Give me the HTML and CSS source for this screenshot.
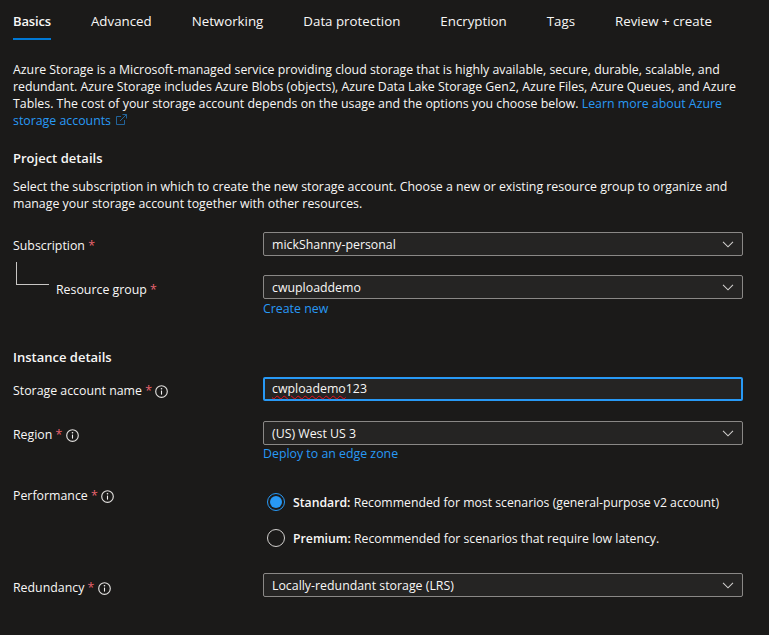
FILE: index.html
```html
<!DOCTYPE html>
<html lang="en">
<head>
  <meta charset="UTF-8">
  <title>Create a storage account</title>
  <link rel="stylesheet" href="styles.css">
</head>
<body>
  <nav class="tabs">
    <a class="tab active">Basics</a>
    <a class="tab">Advanced</a>
    <a class="tab">Networking</a>
    <a class="tab">Data protection</a>
    <a class="tab">Encryption</a>
    <a class="tab">Tags</a>
    <a class="tab">Review + create</a>
  </nav>

  <p class="intro">
    Azure Storage is a Microsoft-managed service providing cloud storage that is highly available, secure, durable, scalable, and<br>
    redundant. Azure Storage includes Azure Blobs (objects), Azure Data Lake Storage Gen2, Azure Files, Azure Queues, and Azure<br>
    Tables. The cost of your storage account depends on the usage and the options you choose below. <a class="link">Learn more about Azure<br>
    storage accounts
    <svg class="external" width="11" height="11" viewBox="0 0 11 11" fill="none" stroke="#2899f5" stroke-width=".9"><path d="M5 2.5H.5v8h8V6"/><path d="M4 7l6.5-6.5M6.5.5h4v4"/></svg></a>
  </p>

  <h2 class="section-title">Project details</h2>
  <p class="section-text">
    Select the subscription in which to create the new storage account. Choose a new or existing resource group to organize and<br>
    manage your storage account together with other resources.
  </p>

  <div class="row row-subscription">
    <label class="label">Subscription <span class="req">*</span></label>
    <div class="field">
      <div class="select"><span>mickShanny-personal</span>
        <svg class="chevron" width="12" height="7" viewBox="0 0 13 8" fill="none" stroke="#d2d0ce" stroke-width="1.2"><path d="M.8 1l5.7 5.7L12.2 1"/></svg>
      </div>
    </div>
  </div>

  <div class="row row-group">
    <label class="label label-child">Resource group <span class="req">*</span></label>
    <div class="field">
      <div class="select"><span>cwuploaddemo</span>
        <svg class="chevron" width="12" height="7" viewBox="0 0 13 8" fill="none" stroke="#d2d0ce" stroke-width="1.2"><path d="M.8 1l5.7 5.7L12.2 1"/></svg>
      </div>
      <a class="link field-link create-link">Create new</a>
    </div>
  </div>

  <h2 class="section-title instance-title">Instance details</h2>

  <div class="row row-name">
    <label class="label">Storage account name <span class="req">*</span>
      <svg class="info" width="13" height="13" viewBox="0 0 13 13"><circle cx="6.5" cy="6.5" r="5.8" fill="none" stroke="#e1dfdd" stroke-width="1.15"/><path d="M6.5 5.6v4" stroke="#f3f2f1" stroke-width="1.1"/><circle cx="6.5" cy="3.8" r=".8" fill="#f3f2f1"/></svg>
    </label>
    <div class="field">
      <div class="select focused"><span class="misspelled">cwploademo</span>123</div>
    </div>
  </div>

  <div class="row row-region">
    <label class="label">Region <span class="req">*</span>
      <svg class="info" width="13" height="13" viewBox="0 0 13 13"><circle cx="6.5" cy="6.5" r="5.8" fill="none" stroke="#e1dfdd" stroke-width="1.15"/><path d="M6.5 5.6v4" stroke="#f3f2f1" stroke-width="1.1"/><circle cx="6.5" cy="3.8" r=".8" fill="#f3f2f1"/></svg>
    </label>
    <div class="field">
      <div class="select"><span>(US) West US 3</span>
        <svg class="chevron" width="12" height="7" viewBox="0 0 13 8" fill="none" stroke="#d2d0ce" stroke-width="1.2"><path d="M.8 1l5.7 5.7L12.2 1"/></svg>
      </div>
      <a class="link field-link">Deploy to an edge zone</a>
    </div>
  </div>

  <div class="row row-performance">
    <label class="label">Performance <span class="req">*</span>
      <svg class="info" width="13" height="13" viewBox="0 0 13 13"><circle cx="6.5" cy="6.5" r="5.8" fill="none" stroke="#e1dfdd" stroke-width="1.15"/><path d="M6.5 5.6v4" stroke="#f3f2f1" stroke-width="1.1"/><circle cx="6.5" cy="3.8" r=".8" fill="#f3f2f1"/></svg>
    </label>
    <div class="field radios">
      <div class="radio-row"><span class="radio checked"></span><span><b>Standard:</b> Recommended for most scenarios (general-purpose v2 account)</span></div>
      <div class="radio-row"><span class="radio"></span><span><b>Premium:</b> Recommended for scenarios that require low latency.</span></div>
    </div>
  </div>

  <div class="row row-redundancy">
    <label class="label">Redundancy <span class="req">*</span>
      <svg class="info" width="13" height="13" viewBox="0 0 13 13"><circle cx="6.5" cy="6.5" r="5.8" fill="none" stroke="#e1dfdd" stroke-width="1.15"/><path d="M6.5 5.6v4" stroke="#f3f2f1" stroke-width="1.1"/><circle cx="6.5" cy="3.8" r=".8" fill="#f3f2f1"/></svg>
    </label>
    <div class="field">
      <div class="select"><span>Locally-redundant storage (LRS)</span>
        <svg class="chevron" width="12" height="7" viewBox="0 0 13 8" fill="none" stroke="#d2d0ce" stroke-width="1.2"><path d="M.8 1l5.7 5.7L12.2 1"/></svg>
      </div>
    </div>
  </div>
</body>
</html>
```

FILE: styles.css
```css
body {
  font-family: 'Open Sans', 'Noto Sans', sans-serif;
  font-size: 12.35px;
  line-height: 17px;
  background-color: #1b1a19;
  color: #f8f7f6;
  margin: 0;
  padding: 0 26px 0 13px;
  height: 635px;
  box-sizing: border-box;
  overflow: hidden;
}
.tabs {
  display: flex;
  height: 40px;
  font-size: 13.3px;
}
.tab {
  margin-right: 40px;
  padding-top: 13px;
  box-sizing: border-box;
  height: 40px;
  white-space: nowrap;
}
.tab.active {
  font-weight: 600;
  font-size: 13px;
  letter-spacing: -0.15px;
  border-bottom: 2px solid #0078d4;
}
.intro {
  margin: 21px 0 0;
}
.link {
  color: #2899f5;
}
.external {
  margin-left: 2px;
  opacity: 0.65;
}
.section-title {
  font-size: 13px;
  font-weight: 600;
  line-height: 18px;
  margin: 20px 0 0;
}
.section-text {
  margin: 11px 0 0;
}
.row {
  display: grid;
  grid-template-columns: 250px 480px;
  margin-top: 20px;
}
.row-group {
  margin-top: 19px;
}
.label {
  padding-top: 5px;
}
.label-child {
  padding-left: 43px;
  padding-top: 6px;
  position: relative;
}
.label-child::before {
  content: "";
  position: absolute;
  left: 3px;
  top: -13px;
  width: 32px;
  height: 22px;
  border-left: 1px solid #c8c6c4;
  border-bottom: 1px solid #c8c6c4;
}
.req {
  color: #e8636e;
}
.info {
  vertical-align: -3px;
}
.select {
  display: flex;
  justify-content: space-between;
  align-items: center;
  height: 24px;
  box-sizing: border-box;
  padding: 0 8px;
  background-color: #252423;
  border: 1px solid #8a8886;
  border-radius: 2px;
}
.select.focused {
  display: block;
  border: 2px solid #2899f5;
  padding: 1px 7px;
  line-height: 17px;
}
.misspelled {
  text-decoration: underline wavy #e81123 1px;
  text-underline-offset: 2px;
}
.field-link {
  display: block;
}
.create-link {
  margin-top: 1px;
}
.instance-title {
  margin-top: 31px;
}
.row-name {
  margin-top: 11px;
}
.row-region {
  margin-top: 20px;
}
.row-performance {
  margin-top: 25px;
}
.row-performance .label {
  padding-top: 0;
}
.radios {
  padding-top: 6px;
}
.radio-row {
  display: flex;
  align-items: center;
  gap: 8px;
  height: 18px;
  margin-left: 4px;
  margin-bottom: 18px;
  font-size: 12.25px;
}
.radio {
  width: 16px;
  height: 16px;
  border: 1px solid #d2d0ce;
  border-radius: 50%;
  flex: none;
  position: relative;
}
.radio.checked {
  border-color: #2899f5;
}
.radio.checked::after {
  content: "";
  position: absolute;
  left: 2px;
  top: 2px;
  width: 12px;
  height: 12px;
  border-radius: 50%;
  background: #2899f5;
}
.radio-row b {
  font-weight: 600;
}
.row-redundancy {
  margin-top: 8px;
}
.row-redundancy .label {
  padding-top: 6px;
}
```
